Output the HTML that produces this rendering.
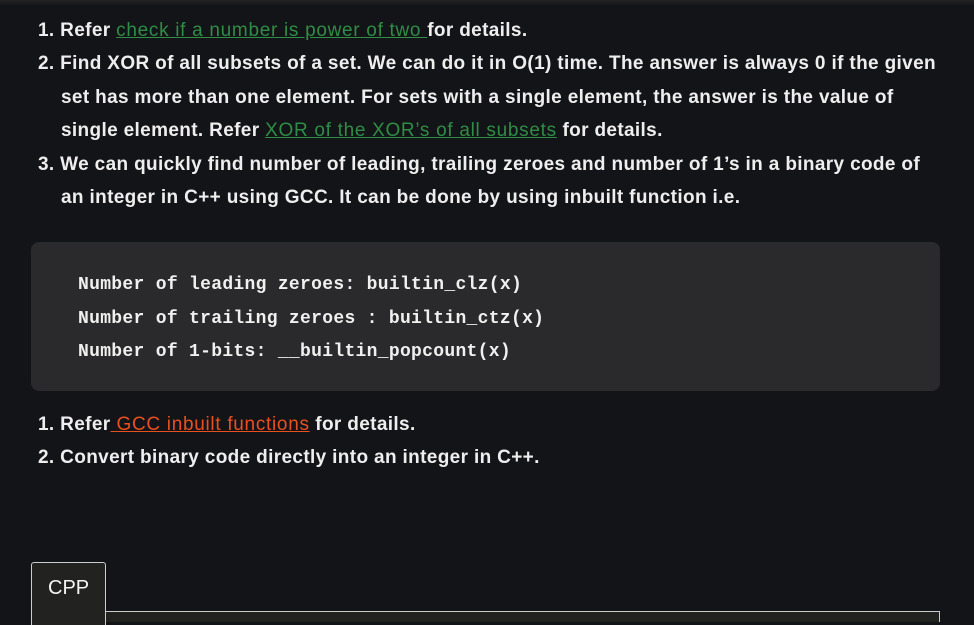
<!DOCTYPE html>
<html><head><meta charset="utf-8"><style>
html,body{margin:0;padding:0;}
body{width:974px;height:622px;background:#131417;position:relative;overflow:hidden;font-family:"Liberation Sans",sans-serif;color:#eeeeee;}
.top{position:absolute;left:0;top:0;width:974px;height:6px;background:linear-gradient(#232323,#131417);}
.l{position:absolute;white-space:nowrap;font-size:19px;font-weight:bold;letter-spacing:0.35px;line-height:24px;margin-top:2px;}
a{color:#2f8d46;text-decoration:underline;font-weight:normal;letter-spacing:0.7px;}
a.o{color:#e8501f;}
.code{position:absolute;left:31px;top:242px;width:909px;height:149px;background:#2a2a2c;border-radius:8px;}
.c{position:absolute;left:78px;font-family:"Liberation Mono",monospace;font-size:18px;font-weight:bold;white-space:pre;color:#f0f0f0;line-height:22px;letter-spacing:0.3px;margin-top:2px;}
.tab{position:absolute;left:31px;top:562px;width:73px;height:62px;background:#222220;border:1px solid #cccccc;border-bottom:none;border-radius:3px 3px 0 0;}
.tab span{position:absolute;left:16px;top:14px;font-size:20px;color:#f5f5f5;}
.line{position:absolute;left:105px;top:611px;width:835px;height:1px;background:#cccccc;}
.rline{position:absolute;left:939px;top:611px;width:1px;height:11px;background:#cccccc;}
.panel{position:absolute;left:106px;top:612px;width:833px;height:10px;background:#222220;}
</style></head><body>
<div class="top"></div>
<div class="l" style="left:38px;top:17px">1. Refer <a href="#">check if a number is power of two </a>for details.</div>
<div class="l" style="left:38px;top:50px">2. Find XOR of all subsets of a set. We can do it in O(1) time. The answer is always 0 if the given</div>
<div class="l" style="left:61px;top:84px">set has more than one element. For sets with a single element, the answer is the value of</div>
<div class="l" style="left:61px;top:117px">single element. Refer <a href="#">XOR of the XOR’s of all subsets</a> for details.</div>
<div class="l" style="left:38px;top:151px">3. We can quickly find number of leading, trailing zeroes and number of 1’s in a binary code of</div>
<div class="l" style="left:61px;top:184px">an integer in C++ using GCC. It can be done by using inbuilt function i.e.</div>
<div class="code"></div>
<div class="c" style="top:272px">Number of leading zeroes: builtin_clz(x)</div>
<div class="c" style="top:306px">Number of trailing zeroes : builtin_ctz(x)</div>
<div class="c" style="top:339px">Number of 1-bits: __builtin_popcount(x)</div>
<div class="l" style="left:38px;top:411px">1. Refer<a class="o" href="#"> GCC inbuilt functions</a> for details.</div>
<div class="l" style="left:38px;top:444px">2. Convert binary code directly into an integer in C++.</div>
<div class="tab"><span>CPP</span></div>
<div class="panel"></div>
<div class="line"></div>
<div class="rline"></div>
</body></html>
